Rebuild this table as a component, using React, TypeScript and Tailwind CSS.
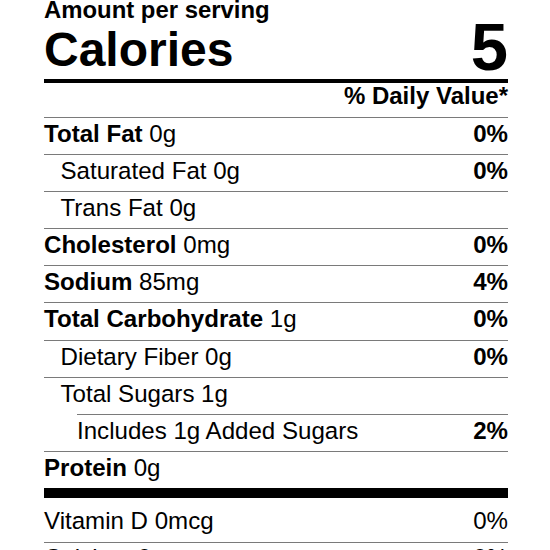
import React from "react";

type Row = {
  bold?: string;
  text: string;
  pct?: string;
  indent?: 0 | 1 | 2;
};

const rows: Row[] = [
  { bold: "Total Fat", text: "0g", pct: "0%" },
  { text: "Saturated Fat 0g", pct: "0%", indent: 1 },
  { text: "Trans Fat 0g", indent: 1 },
  { bold: "Cholesterol", text: "0mg", pct: "0%" },
  { bold: "Sodium", text: "85mg", pct: "4%" },
  { bold: "Total Carbohydrate", text: "1g", pct: "0%" },
  { text: "Dietary Fiber 0g", pct: "0%", indent: 1 },
  { text: "Total Sugars 1g", indent: 1 },
  { text: "Includes 1g Added Sugars", pct: "2%", indent: 2 },
  { bold: "Protein", text: "0g" },
];

export default function App() {
  return (
    <div
      className="w-[550px] h-[550px] overflow-hidden bg-white text-black"
      style={{ fontFamily: '"Liberation Sans", Arial, sans-serif' }}
    >
      <div className="ml-[44px] w-[464px]">
        <div className="h-[20px] text-[23.9px] font-bold leading-[20px] whitespace-nowrap">
          Amount per serving
        </div>
        <div className="flex h-[59px] items-start justify-between">
          <span className="mt-[6px] text-[48px] font-bold leading-none">Calories</span>
          <span className="mt-[-7.2px] text-[67px] font-bold leading-none">5</span>
        </div>
        <div className="h-[4px] bg-black" />
        <div className="h-[34px] pt-[0.5px] text-right text-[24px] font-bold leading-none">
          % Daily Value*
        </div>
        {rows.map((r, i) => (
          <div
            key={i}
            className={
              "flex h-[37.1px] items-start justify-between border-t border-[#7a7a7a] pt-[4px] text-[24.1px] leading-none whitespace-nowrap " +
              (r.indent === 2 ? "ml-[33px]" : "")
            }
          >
            <span className={r.indent === 1 ? "pl-[16.5px]" : ""}>
              {r.bold ? <b className="font-bold">{r.bold}</b> : null}
              {r.bold ? " " : ""}
              {r.text}
            </span>
            {r.pct ? <span className="font-bold">{r.pct}</span> : null}
          </div>
        ))}
        <div className="h-[10px] bg-black" />
        <div className="flex h-[44px] items-start justify-between pt-[11px] text-[24.1px] leading-none">
          <span>Vitamin D 0mcg</span>
          <span>0%</span>
        </div>
        <div className="flex h-[37.1px] items-start justify-between border-t border-[#7a7a7a] pt-[3px] text-[24.1px] leading-none">
          <span>Calcium 0mg</span>
          <span>0%</span>
        </div>
      </div>
    </div>
  );
}
